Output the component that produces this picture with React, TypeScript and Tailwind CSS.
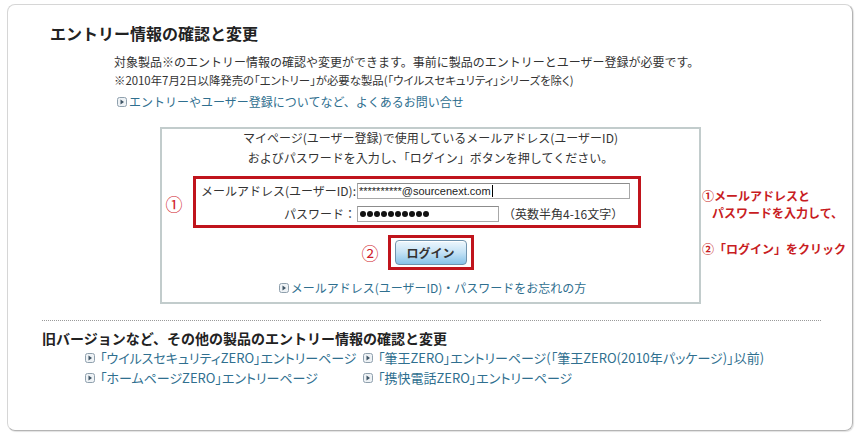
import React from "react";

const Bullet = () => (
  <svg width="10" height="10" viewBox="0 0 10 10" className="shrink-0">
    <rect x="0.5" y="0.5" width="9" height="9" rx="2" fill="#eef2f5" stroke="#8fa0ad" />
    <path d="M3.5 2.5 L7 5 L3.5 7.5 Z" fill="#3f5566" />
  </svg>
);

const LinkItem = ({ children, className = "" }: { children: React.ReactNode; className?: string }) => (
  <div className={"flex items-center gap-[2px] whitespace-nowrap text-[#2f6f8f] " + className}>
    <Bullet />
    <span>{children}</span>
  </div>
);

const dots = [0, 1, 2, 3, 4, 5, 6, 7, 8, 9];

export default function App() {
  return (
    <div className="w-[860px] h-[439px] bg-white pt-[4px] pl-[7px] text-[#333] [font-family:'Noto_Sans_CJK_JP','Noto_Sans',sans-serif]">
      <div className="w-[846px] h-[427px] rounded-[8px] border border-[#d6d6d6] border-r-[#b4b4b4] border-b-[#b4b4b4] shadow-[1px_1px_1px_#e2e2e2] flex flex-col">
        <div className="mt-[18px] ml-[42px] text-[16px] leading-[20px] font-bold text-[#222]">
          エントリー情報の確認と変更
        </div>
        <div className="mt-[10px] ml-[106px] text-[12px] leading-[18px] text-[#333]">
          対象製品※のエントリー情報の確認や変更ができます。事前に製品のエントリーとユーザー登録が必要です。
        </div>
        <div className="mt-[1px] ml-[106px] text-[11.4px] leading-[16px] text-[#333] [font-feature-settings:'palt']">
          ※2010年7月2日以降発売の「エントリー」が必要な製品(「ウイルスセキュリティ」シリーズを除く)
        </div>
        <LinkItem className="mt-[5px] ml-[109px] text-[12px] leading-[18px]">
          エントリーやユーザー登録についてなど、よくあるお問い合せ
        </LinkItem>

        <div className="mt-[16px] ml-[152px] flex">
          <div className="w-[541px] h-[177px] border-2 border-[#c2cccc] flex flex-col items-center">
            <div className="mt-[0px] text-[12px] leading-[18px]">
              マイページ(ユーザー登録)で使用しているメールアドレス(ユーザーID)
            </div>
            <div className="mt-[2px] text-[12px] leading-[18px]">
              およびパスワードを入力し、「ログイン」ボタンを押してください。
            </div>
            <div className="mt-[9px] self-stretch flex items-center pl-[3px]">
              <span className="w-[18px] text-[17px] leading-[18px] text-[#d0202a] text-center mt-[4px]">①</span>
              <div className="ml-[10px] w-[448px] h-[52px] border-[3px] border-[#c0141c] flex flex-col pt-[3px] gap-[5px]">
                <div className="h-[18px] flex items-center text-[12px]">
                  <span className="w-[161px] text-right leading-[18px] pr-[1px]">メールアドレス(ユーザーID):</span>
                  <div className="w-[273px] h-[16px] border border-[#a8a8a8] border-t-[#8c8c8c] bg-white flex items-center pl-[1px] text-[11px] leading-[14px] text-[#222] [font-family:'Liberation_Sans',sans-serif]">
                    **********@sourcenext.com<span className="inline-block w-px h-[12px] bg-black ml-px" />
                  </div>
                </div>
                <div className="h-[18px] flex items-center text-[12px]">
                  <span className="w-[161px] text-right leading-[18px] pr-[1px]">パスワード：</span>
                  <div className="w-[142px] h-[16px] border border-[#a8a8a8] border-t-[#8c8c8c] bg-white flex items-center pl-[2px] gap-[1.2px]">
                    {dots.map((d) => (
                      <span key={d} className="w-[5.8px] h-[5.8px] rounded-full bg-[#111]" />
                    ))}
                  </div>
                  <span className="ml-[4px] leading-[18px]">（英数半角4-16文字）</span>
                </div>
              </div>
            </div>
            <div className="mt-[7px] self-stretch grid grid-cols-[1fr_auto_1fr] items-center">
              <span className="justify-self-end mr-[9px] text-[17px] leading-[18px] text-[#d0202a]">②</span>
              <div className="w-[86px] h-[35px] border-[3px] border-[#c0141c] flex items-center justify-center">
                <div className="w-[72px] h-[25px] rounded-[4px] border border-[#6f93ad] bg-gradient-to-b from-[#eef7fd] via-[#c4e2f5] to-[#86c2e8] flex items-center justify-center text-[12px] font-bold text-[#333] shadow-[inset_0_1px_0_#ffffff]">
                  ログイン
                </div>
              </div>
              <span />
            </div>
            <LinkItem className="mt-[9px] text-[12px] leading-[18px] ml-[4px]">
              メールアドレス(ユーザーID)・パスワードをお忘れの方
            </LinkItem>
          </div>
          <div className="pt-[60px] pl-[1px] text-[12px] leading-[17px] font-bold text-[#c81c22]">
            <div>①メールアドレスと</div>
            <div className="pl-[10px]">パスワードを入力して、</div>
            <div className="mt-[19px]">②「ログイン」をクリック</div>
          </div>
        </div>

        <div className="mt-[16px] ml-[34px] w-[779px] border-t border-dotted border-[#9a9a9a]" />
        <div className="mt-[7px] ml-[34px] text-[14px] leading-[20px] font-bold text-[#222]">
          旧バージョンなど、その他の製品のエントリー情報の確認と変更
        </div>
        <div className="ml-[77px] grid grid-cols-[278px_auto] text-[13px] leading-[20px] [font-feature-settings:'palt']">
          <LinkItem>&nbsp;「ウイルスセキュリティZERO」エントリーページ</LinkItem>
          <LinkItem>&nbsp;「筆王ZERO」エントリーページ(「筆王ZERO(2010年パッケージ)」以前)</LinkItem>
          <LinkItem>&nbsp;「ホームページZERO」エントリーページ</LinkItem>
          <LinkItem>&nbsp;「携快電話ZERO」エントリーページ</LinkItem>
        </div>
      </div>
    </div>
  );
}
